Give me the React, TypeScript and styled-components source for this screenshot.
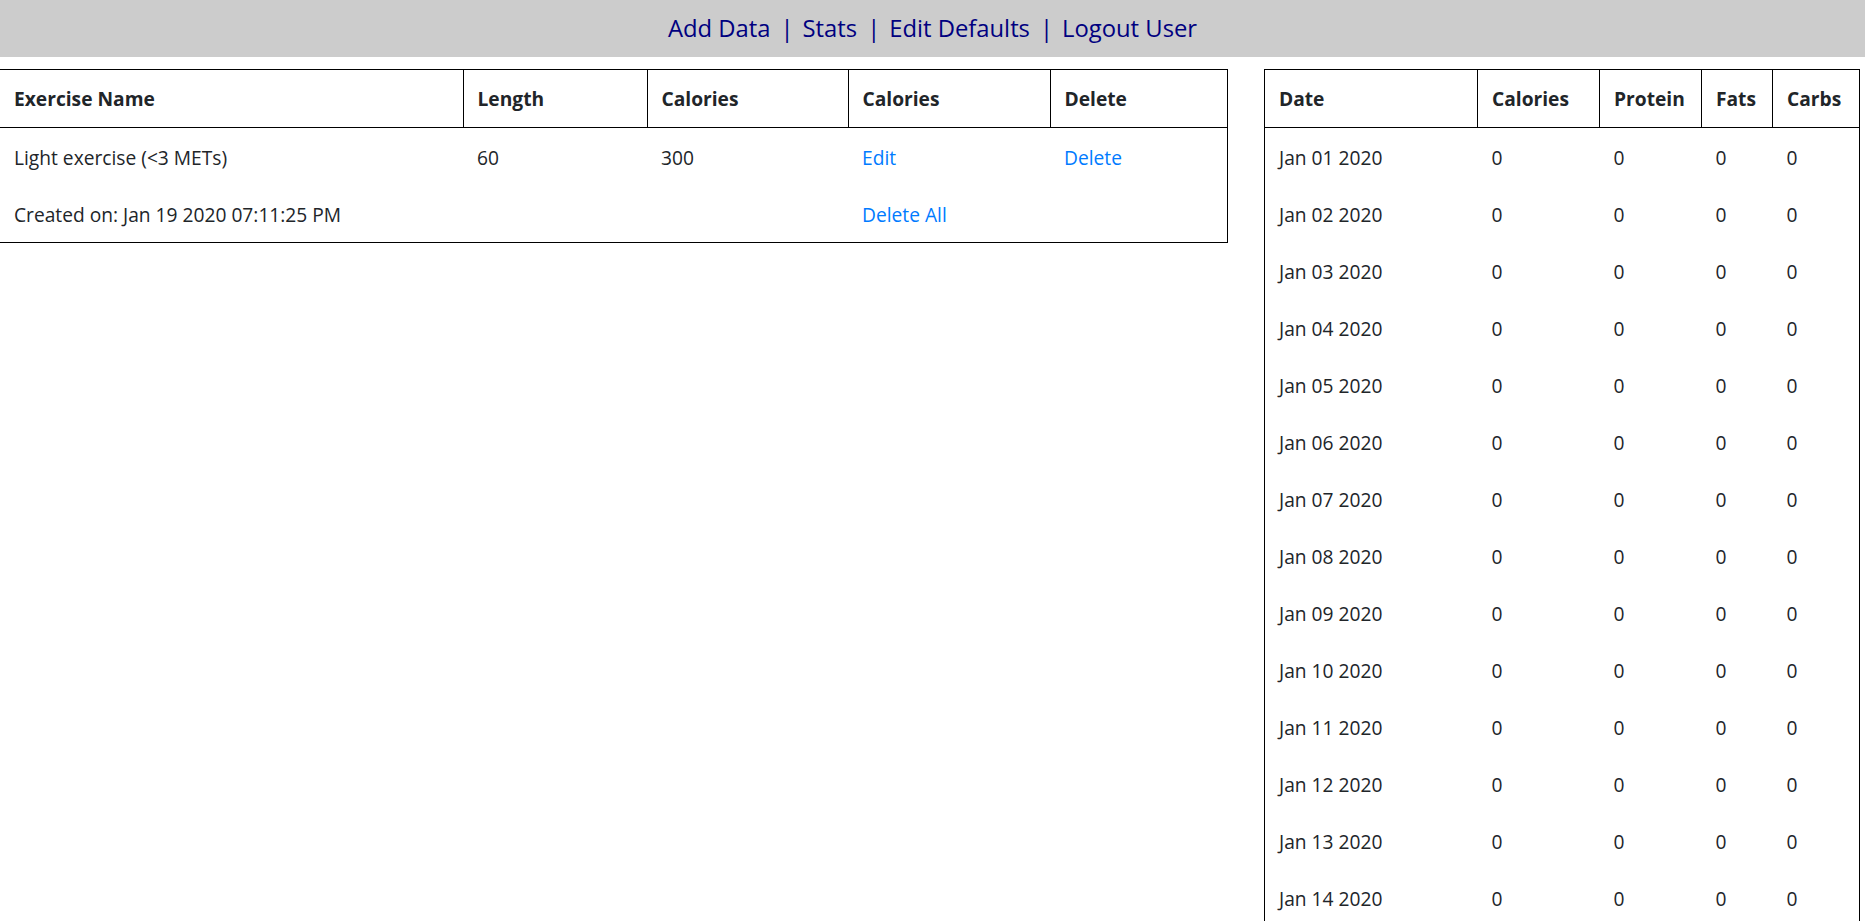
import styled, { createGlobalStyle } from 'styled-components';

const GlobalStyle = createGlobalStyle`
  html, body {
    margin: 0;
    padding: 0;
    background: #fff;
  }
  body {
    font-family: "Open Sans", "Noto Sans", "Liberation Sans", sans-serif;
    font-size: 19.2px;
    line-height: 29px;
    color: #212529;
  }
`;

const NavBar = styled.nav`
  height: 57px;
  box-sizing: border-box;
  padding-bottom: 2px;
  background: #cccccc;
  display: flex;
  justify-content: center;
  align-items: center;
  font-size: 23.8px;
  line-height: 32px;
  color: #000080;
`;

const NavLink = styled.a`
  color: #000080;
  text-decoration: none;
  cursor: pointer;
`;

const NavSep = styled.span`
  margin: 0 9px 0 10px;
`;

const Main = styled.main`
  display: flex;
  justify-content: space-between;
  align-items: flex-start;
  padding: 12px 5px 0 0;
`;

const Table = styled.table<{ $width: number; $sides?: boolean }>`
  width: ${(p) => p.$width}px;
  border-collapse: collapse;
  table-layout: fixed;
  border: 1px solid #000;
  border-left: ${(p) => (p.$sides ? '1px solid #000' : 'none')};
  font-family: "Open Sans", "Noto Sans", "Liberation Sans", sans-serif;
  font-size: 19.2px;
  line-height: 29px;
  color: #212529;
`;

const Col = styled.col<{ $w: number }>`
  width: ${(p) => p.$w}px;
`;

const Th = styled.th`
  text-align: left;
  font-weight: 700;
  padding: 14px 14px;
  border: 1px solid #000;
  white-space: nowrap;

  &:first-child {
    border-left: none;
  }
`;

const Td = styled.td`
  padding: 15px 14px 13px;
  vertical-align: top;
  white-space: nowrap;
`;

const Action = styled.a`
  color: #007bff;
  text-decoration: none;
  cursor: pointer;
`;

const exerciseCols = [463, 184, 201, 202, 177];
const statCols = [213, 122, 102, 71, 87];

const days = Array.from({ length: 14 }, (_, i) => `Jan ${String(i + 1).padStart(2, '0')} 2020`);

const navItems = ['Add Data', 'Stats', 'Edit Defaults', 'Logout User'];

export default function App() {
  return (
    <>
      <GlobalStyle />
      <NavBar>
        {navItems.map((item, i) => (
          <span key={item}>
            {i > 0 && <NavSep>|</NavSep>}
            <NavLink>{item}</NavLink>
          </span>
        ))}
      </NavBar>
      <Main>
        <Table $width={1227}>
          <colgroup>
            {exerciseCols.map((w, i) => (
              <Col key={i} $w={w} />
            ))}
          </colgroup>
          <thead>
            <tr>
              <Th>Exercise Name</Th>
              <Th>Length</Th>
              <Th>Calories</Th>
              <Th>Calories</Th>
              <Th>Delete</Th>
            </tr>
          </thead>
          <tbody>
            <tr>
              <Td>Light exercise (&lt;3 METs)</Td>
              <Td>60</Td>
              <Td>300</Td>
              <Td>
                <Action>Edit</Action>
              </Td>
              <Td>
                <Action>Delete</Action>
              </Td>
            </tr>
            <tr>
              <Td colSpan={3}>Created on: Jan 19 2020 07:11:25 PM</Td>
              <Td colSpan={2}>
                <Action>Delete All</Action>
              </Td>
            </tr>
          </tbody>
        </Table>
        <Table $width={595} $sides>
          <colgroup>
            {statCols.map((w, i) => (
              <Col key={i} $w={w} />
            ))}
          </colgroup>
          <thead>
            <tr>
              <Th>Date</Th>
              <Th>Calories</Th>
              <Th>Protein</Th>
              <Th>Fats</Th>
              <Th>Carbs</Th>
            </tr>
          </thead>
          <tbody>
            {days.map((d) => (
              <tr key={d}>
                <Td>{d}</Td>
                <Td>0</Td>
                <Td>0</Td>
                <Td>0</Td>
                <Td>0</Td>
              </tr>
            ))}
          </tbody>
        </Table>
      </Main>
    </>
  );
}
